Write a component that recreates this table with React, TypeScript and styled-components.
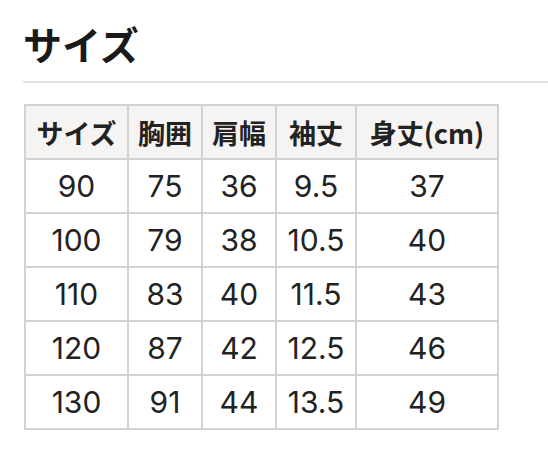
import styled, { createGlobalStyle } from 'styled-components';

const GlobalStyle = createGlobalStyle`
  html, body {
    margin: 0;
    padding: 0;
    background: #fff;
  }
  body {
    font-family: "Noto Sans CJK JP", "Noto Sans", sans-serif;
    color: #222;
  }
`;

const Page = styled.div`
  padding: 19px 0 0 24px;
`;

const Title = styled.h2`
  margin: 0;
  font-size: 39px;
  font-weight: 700;
  line-height: 48px;
  color: #1a1a1a;
  padding-bottom: 14px;
  border-bottom: 2px solid #e2e2e2;
  margin-left: -1px;
`;

const Table = styled.table`
  margin-top: 21px;
  border-collapse: collapse;
  border: 2px solid #d2d2d2;
  table-layout: fixed;
`;

const Th = styled.th`
  height: 52px;
  padding: 0;
  background: #f5f4f2;
  border: 2px solid #d2d2d2;
  font-size: 27px;
  font-weight: 700;
  color: #222;
  text-align: center;
  white-space: nowrap;
`;

const Td = styled.td`
  height: 52px;
  padding: 0;
  border: 2px solid #d2d2d2;
  font-family: Inter, "Noto Sans CJK JP", sans-serif;
  font-size: 30px;
  font-weight: 400;
  color: #222;
  text-align: center;
`;

const widths = [103, 74, 74, 80, 142];
const headers = ['サイズ', '胸囲', '肩幅', '袖丈', '身丈(cm)'];
const rows = [
  ['90', '75', '36', '9.5', '37'],
  ['100', '79', '38', '10.5', '40'],
  ['110', '83', '40', '11.5', '43'],
  ['120', '87', '42', '12.5', '46'],
  ['130', '91', '44', '13.5', '49'],
];

export default function App() {
  return (
    <>
      <GlobalStyle />
      <Page>
        <Title>サイズ</Title>
        <Table>
          <colgroup>
            {widths.map((w, i) => (
              <col key={i} style={{ width: w }} />
            ))}
          </colgroup>
          <thead>
            <tr>
              {headers.map(h => <Th key={h}>{h}</Th>)}
            </tr>
          </thead>
          <tbody>
            {rows.map(r => (
              <tr key={r[0]}>
                {r.map((c, i) => <Td key={i}>{c}</Td>)}
              </tr>
            ))}
          </tbody>
        </Table>
      </Page>
    </>
  );
}
